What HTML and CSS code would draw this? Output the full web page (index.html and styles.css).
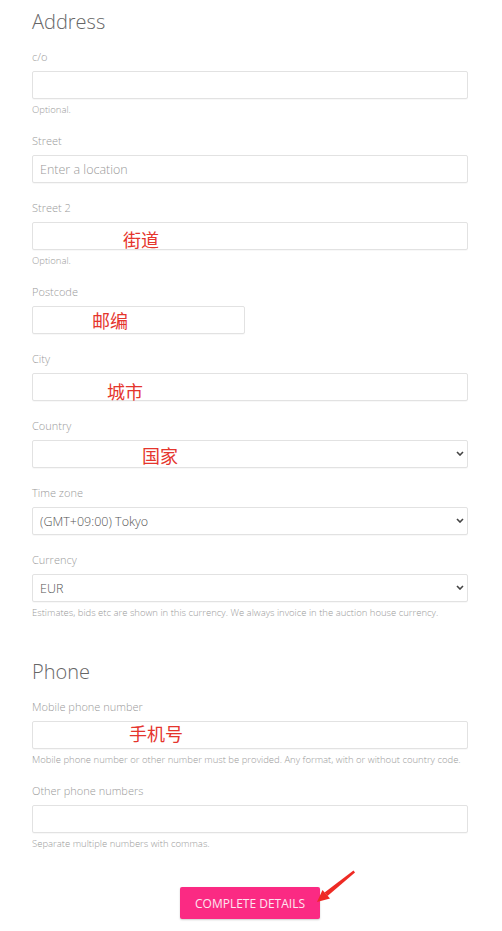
FILE: index.html
```html
<!DOCTYPE html>
<html lang="en">
<head>
    <meta charset="UTF-8">
    <meta name="viewport" content="width=device-width, initial-scale=1.0">
    <title>Complete details</title>
    <link rel="stylesheet" href="styles.css">
</head>
<body>
    <div class="container">
        <!-- Endereço -->
        <h2 class="titulo">Address</h2>

        <div class="campo">
            <label for="co">c/o</label>
            <div class="caixa">
                <input type="text" id="co">
            </div>
            <p class="ajuda">Optional.</p>
        </div>

        <div class="campo">
            <label for="rua">Street</label>
            <div class="caixa">
                <input type="text" id="rua" placeholder="Enter a location">
            </div>
        </div>

        <div class="campo">
            <label for="rua2">Street 2</label>
            <div class="caixa">
                <input type="text" id="rua2">
                <span class="nota nota-rua">街道</span>
            </div>
            <p class="ajuda">Optional.</p>
        </div>

        <div class="campo">
            <label for="cep">Postcode</label>
            <div class="caixa curta">
                <input type="text" id="cep">
                <span class="nota nota-cep">邮编</span>
            </div>
        </div>

        <div class="campo">
            <label for="cidade">City</label>
            <div class="caixa">
                <input type="text" id="cidade">
                <span class="nota nota-cidade">城市</span>
            </div>
        </div>

        <div class="campo">
            <label for="pais">Country</label>
            <div class="caixa">
                <select id="pais"><option></option></select>
                <svg class="seta" viewBox="0 0 8 5"><path d="M1 1 L4 4 L7 1" /></svg>
                <span class="nota nota-pais">国家</span>
            </div>
        </div>

        <div class="campo">
            <label for="fuso">Time zone</label>
            <div class="caixa">
                <select id="fuso"><option>(GMT+09:00) Tokyo</option></select>
                <svg class="seta" viewBox="0 0 8 5"><path d="M1 1 L4 4 L7 1" /></svg>
            </div>
        </div>

        <div class="campo">
            <label for="moeda">Currency</label>
            <div class="caixa">
                <select id="moeda"><option>EUR</option></select>
                <svg class="seta" viewBox="0 0 8 5"><path d="M1 1 L4 4 L7 1" /></svg>
            </div>
            <p class="ajuda">Estimates, bids etc are shown in this currency. We always invoice in the auction house currency.</p>
        </div>

        <!-- Telefone -->
        <h2 class="titulo secao">Phone</h2>

        <div class="campo">
            <label for="celular">Mobile phone number</label>
            <div class="caixa">
                <input type="text" id="celular">
                <span class="nota nota-celular">手机号</span>
            </div>
            <p class="ajuda">Mobile phone number or other number must be provided. Any format, with or without country code.</p>
        </div>

        <div class="campo">
            <label for="outros">Other phone numbers</label>
            <div class="caixa">
                <input type="text" id="outros">
            </div>
            <p class="ajuda">Separate multiple numbers with commas.</p>
        </div>

        <div class="acoes">
            <button id="completar">COMPLETE DETAILS</button>
            <svg class="flecha" viewBox="310 866 50 45">
                <polygon points="353.5,871.5 355,873.5 327.5,897 324.5,893.5" />
                <polygon points="317,903 322.5,891 330,899.5" />
            </svg>
        </div>
    </div>
</body>
</html>
```

FILE: styles.css
```css
/* Página */
body {
    font-family: "Open Sans", "Liberation Sans", sans-serif;
    font-weight: 300;
    background-color: #ffffff;
    color: #555555;
    margin: 0;
    padding: 0;
}

/* Contêiner central */
.container {
    padding: 8px 34px 8px 32px;
}

/* Títulos das seções */
.titulo {
    font-size: 20px;
    font-weight: 300;
    line-height: 28px;
    margin: 0 0 14px 0;
    color: #666666;
}

/* margem colapsa com a do campo anterior */
.secao {
    margin-top: 39px;
}

/* Campos */
.campo {
    margin-bottom: 18px;
}

.campo label {
    display: block;
    font-size: 11px;
    line-height: 14px;
    color: #9a9a9a;
    margin-bottom: 7px;
}

.caixa {
    position: relative;
}

.curta {
    width: 213px;
}

input[type="text"], select {
    display: block;
    box-sizing: border-box;
    width: 100%;
    height: 28px;
    margin: 0;
    padding: 0 7px;
    font-family: "Open Sans", "Liberation Sans", sans-serif;
    font-weight: 300;
    font-size: 12.5px;
    color: #555555;
    background-color: #ffffff;
    border: 1px solid #e2e2e2;
    border-radius: 2px;
    box-shadow: 0 1px 1px rgba(0, 0, 0, 0.03);
    outline: none;
}

input::placeholder {
    color: #999999;
}

select {
    appearance: none;
    -webkit-appearance: none;
}

/* Seta do select */
.seta {
    position: absolute;
    right: 4px;
    top: 11px;
    width: 8px;
    height: 5px;
    fill: none;
    stroke: #444444;
    stroke-width: 1.6;
}

/* Texto de ajuda */
.ajuda {
    font-size: 9.5px;
    line-height: 12px;
    color: #9a9a9a;
    margin: 5px 0 0 0;
}

/* Anotações em vermelho */
.nota {
    position: absolute;
    font-family: "Noto Sans CJK SC", sans-serif;
    font-size: 18px;
    line-height: 18px;
    font-weight: 400;
    color: #e5352d;
}

.nota-rua { left: 91px; top: 8px; }
.nota-cep { left: 60px; top: 5px; }
.nota-cidade { left: 75px; top: 9px; }
.nota-pais { left: 110px; top: 6px; }
.nota-celular { left: 97px; top: 3px; }

/* Botão */
.acoes {
    position: relative;
    display: flex;
    justify-content: center;
    margin-top: 37px;
}

button {
    width: 140px;
    height: 32px;
    padding: 0;
    font-family: "Open Sans", "Liberation Sans", sans-serif;
    font-weight: 400;
    font-size: 12px;
    color: #fde6f0;
    background-color: #fb2a83;
    border: none;
    border-radius: 2px;
    box-shadow: 0 1px 2px rgba(0, 0, 0, 0.2);
    cursor: pointer;
}

.flecha {
    position: absolute;
    left: 278px;
    top: -22px;
    width: 50px;
    height: 45px;
    fill: #ee2a24;
}
```
